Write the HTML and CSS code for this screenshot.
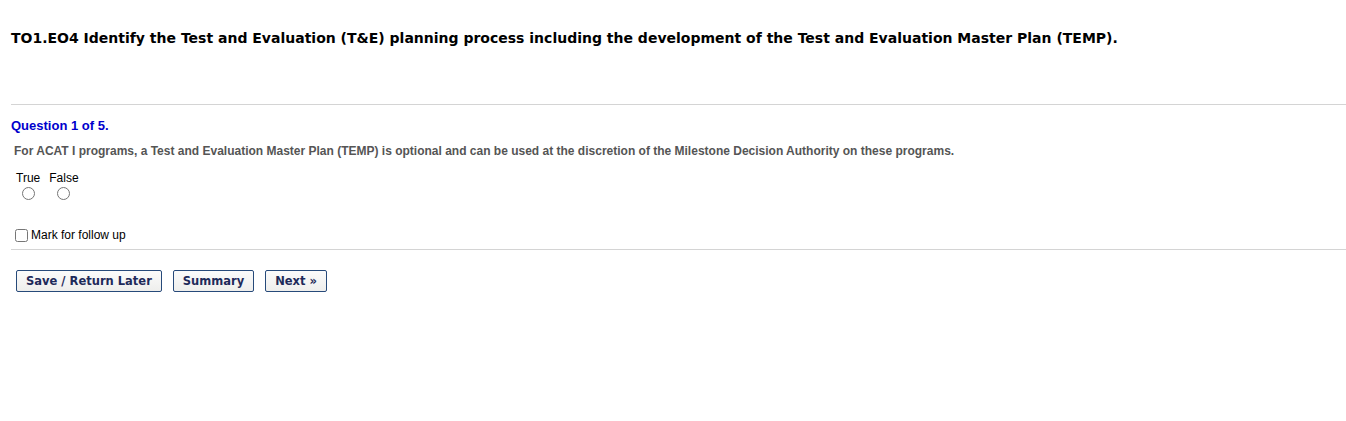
FILE: index.html
```html
<!DOCTYPE html>
<html>
<head>
<meta charset="utf-8">
<link rel="stylesheet" href="styles.css">
</head>
<body>
<div class="page">
  <h1 class="title">TO1.EO4 Identify the Test and Evaluation (T&amp;E) planning process including the development of the Test and Evaluation Master Plan (TEMP).</h1>
  <hr class="rule">
  <div class="qhead">Question 1 of 5.</div>
  <div class="qtext">For ACAT I programs, a Test and Evaluation Master Plan (TEMP) is optional and can be used at the discretion of the Milestone Decision Authority on these programs.</div>
  <div class="answers">
    <label class="answer"><span class="alabel">True</span><input type="radio" name="a" class="radio"></label>
    <label class="answer"><span class="alabel">False</span><input type="radio" name="a" class="radio"></label>
  </div>
  <label class="follow"><input type="checkbox" class="check">Mark for follow up</label>
  <hr class="rule rule2">
  <div class="buttons">
    <button class="btn">Save / Return Later</button>
    <button class="btn">Summary</button>
    <button class="btn">Next &raquo;</button>
  </div>
</div>
</body>
</html>
```
FILE: styles.css
```css
html, body { margin: 0; padding: 0; background: #fff; }
.page { padding-left: 11px; font-family: "Liberation Sans", Arial, sans-serif; }
.title {
  font-family: "DejaVu Sans", Verdana, sans-serif;
  font-size: 14px;
  font-weight: bold;
  color: #000;
  margin: 0;
  padding-top: 29px;
  line-height: 18px;
  height: 75px;
}
.rule { border: 0; border-top: 1px solid #d4d4d4; margin: 0; height: 0; }
.qhead {
  margin-top: 13px;
  font-size: 13px;
  font-weight: bold;
  color: #0000cc;
  line-height: 15px;
}
.qtext {
  margin-top: 11px;
  margin-left: 3px;
  font-size: 12px;
  font-weight: bold;
  color: #555;
  line-height: 14px;
}
.answers { display: flex; gap: 9px; margin-top: 13px; margin-left: 5px; }
.answer { display: flex; flex-direction: column; align-items: center; font-size: 12px; color: #000; line-height: 14px; }
.radio { margin: 2px 0 0 0; width: 13px; height: 13px; }
.follow { display: flex; align-items: center; margin-top: 27px; margin-left: 4px; font-size: 12px; color: #000; line-height: 14px; height: 16px; }
.check { margin: 0 3px 0 0; width: 13px; height: 13px; }
.rule2 { margin-top: 6px; }
.buttons { display: flex; gap: 11px; margin-top: 20px; margin-left: 5px; }
.btn {
  font-family: "DejaVu Sans", Verdana, sans-serif;
  font-weight: bold;
  font-size: 11.5px;
  color: #1e2a5a;
  background: linear-gradient(#fbfbfb, #eeeeec);
  border: 1px solid #274a7a;
  border-radius: 2px;
  height: 22px;
  padding: 0 9px;
  margin: 0;
}
```
